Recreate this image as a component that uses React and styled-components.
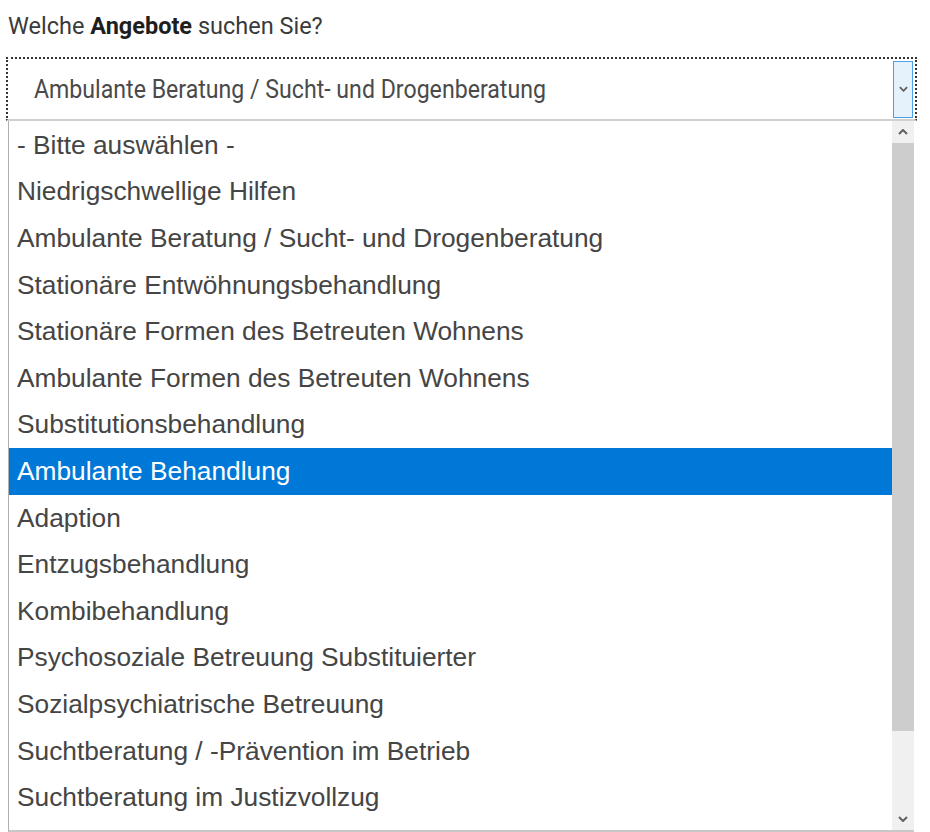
import React from 'react'
import styled, { createGlobalStyle } from 'styled-components'

const options = [
  '- Bitte auswählen -',
  'Niedrigschwellige Hilfen',
  'Ambulante Beratung / Sucht- und Drogenberatung',
  'Stationäre Entwöhnungsbehandlung',
  'Stationäre Formen des Betreuten Wohnens',
  'Ambulante Formen des Betreuten Wohnens',
  'Substitutionsbehandlung',
  'Ambulante Behandlung',
  'Adaption',
  'Entzugsbehandlung',
  'Kombibehandlung',
  'Psychosoziale Betreuung Substituierter',
  'Sozialpsychiatrische Betreuung',
  'Suchtberatung / -Prävention im Betrieb',
  'Suchtberatung im Justizvollzug',
]

const App = () => {
  return (
    <>
      <GlobalStyle />
      <Page>
        <Label>
          Welche <b>Angebote</b> suchen Sie?
        </Label>
        <Select>
          <Value>Ambulante Beratung / Sucht- und Drogenberatung</Value>
          <DropButton>
            <Chevron viewBox="0 0 10 6">
              <path d="M1 1 L5 5 L9 1" />
            </Chevron>
          </DropButton>
        </Select>
        <ListBox>
          <Options>
            {options.map((o, i) => (
              <Option key={o} selected={i === 7}>{o}</Option>
            ))}
          </Options>
          <Scrollbar>
            <Arrow viewBox="0 0 10 6">
              <path d="M1 5 L5 1 L9 5" />
            </Arrow>
            <Thumb />
            <Arrow viewBox="0 0 10 6">
              <path d="M1 1 L5 5 L9 1" />
            </Arrow>
          </Scrollbar>
        </ListBox>
      </Page>
    </>
  )
}

export default App

const GlobalStyle = createGlobalStyle`
body {
  margin: 0;
  background: #fff;
}
`

const Page = styled.div`
width: 930px;
height: 832px;
overflow: hidden;
padding: 12px 0 0 6px;
box-sizing: border-box;
`

const Label = styled.div`
font-family: 'Roboto', sans-serif;
font-size: 23.5px;
color: #3a3a3a;
padding-left: 2px;
height: 45px;
b {
  color: #1e1e1e;
}
`

const Select = styled.div`
width: 911px;
height: 64px;
box-sizing: border-box;
border: 2px dotted #333;
border-bottom: 2px solid #d0d0d0;
display: flex;
align-items: center;
justify-content: space-between;
padding: 0 2px 0 26px;
`

const Value = styled.div`
font-family: 'Roboto', sans-serif;
font-size: 25px;
color: #4a4a4a;
transform: scaleX(0.925);
transform-origin: left center;
white-space: nowrap;
`

const DropButton = styled.div`
width: 20px;
height: 57px;
box-sizing: border-box;
border: 1px solid #4aa1e8;
background: #e5f1fb;
display: flex;
align-items: center;
justify-content: center;
`

const Chevron = styled.svg`
width: 9px;
height: 6px;
fill: none;
stroke: #606060;
stroke-width: 2;
`

const ListBox = styled.div`
margin-left: 2px;
width: 906px;
height: 712px;
box-sizing: border-box;
border-left: 1px solid #b0b0b0;
border-bottom: 3px solid #c8c8c8;
display: flex;
`

const Options = styled.div`
flex: 1;
padding-top: 1px;
`

const Option = styled.div`
height: 46.6px;
display: flex;
align-items: center;
padding-left: 8px;
font-family: 'Liberation Sans', Arial, sans-serif;
font-size: 26.3px;
color: ${p => (p.selected ? '#fff' : '#454545')};
background: ${p => (p.selected ? '#0078d7' : 'transparent')};
white-space: nowrap;
`

const Scrollbar = styled.div`
width: 22px;
background: #f0f0f0;
display: flex;
flex-direction: column;
align-items: center;
`

const Arrow = styled.svg`
width: 10px;
height: 6px;
margin: 8px 0;
fill: none;
stroke: #606060;
stroke-width: 2;
`

const Thumb = styled.div`
width: 22px;
height: 588px;
background: #cdcdcd;
margin-bottom: auto;
`
